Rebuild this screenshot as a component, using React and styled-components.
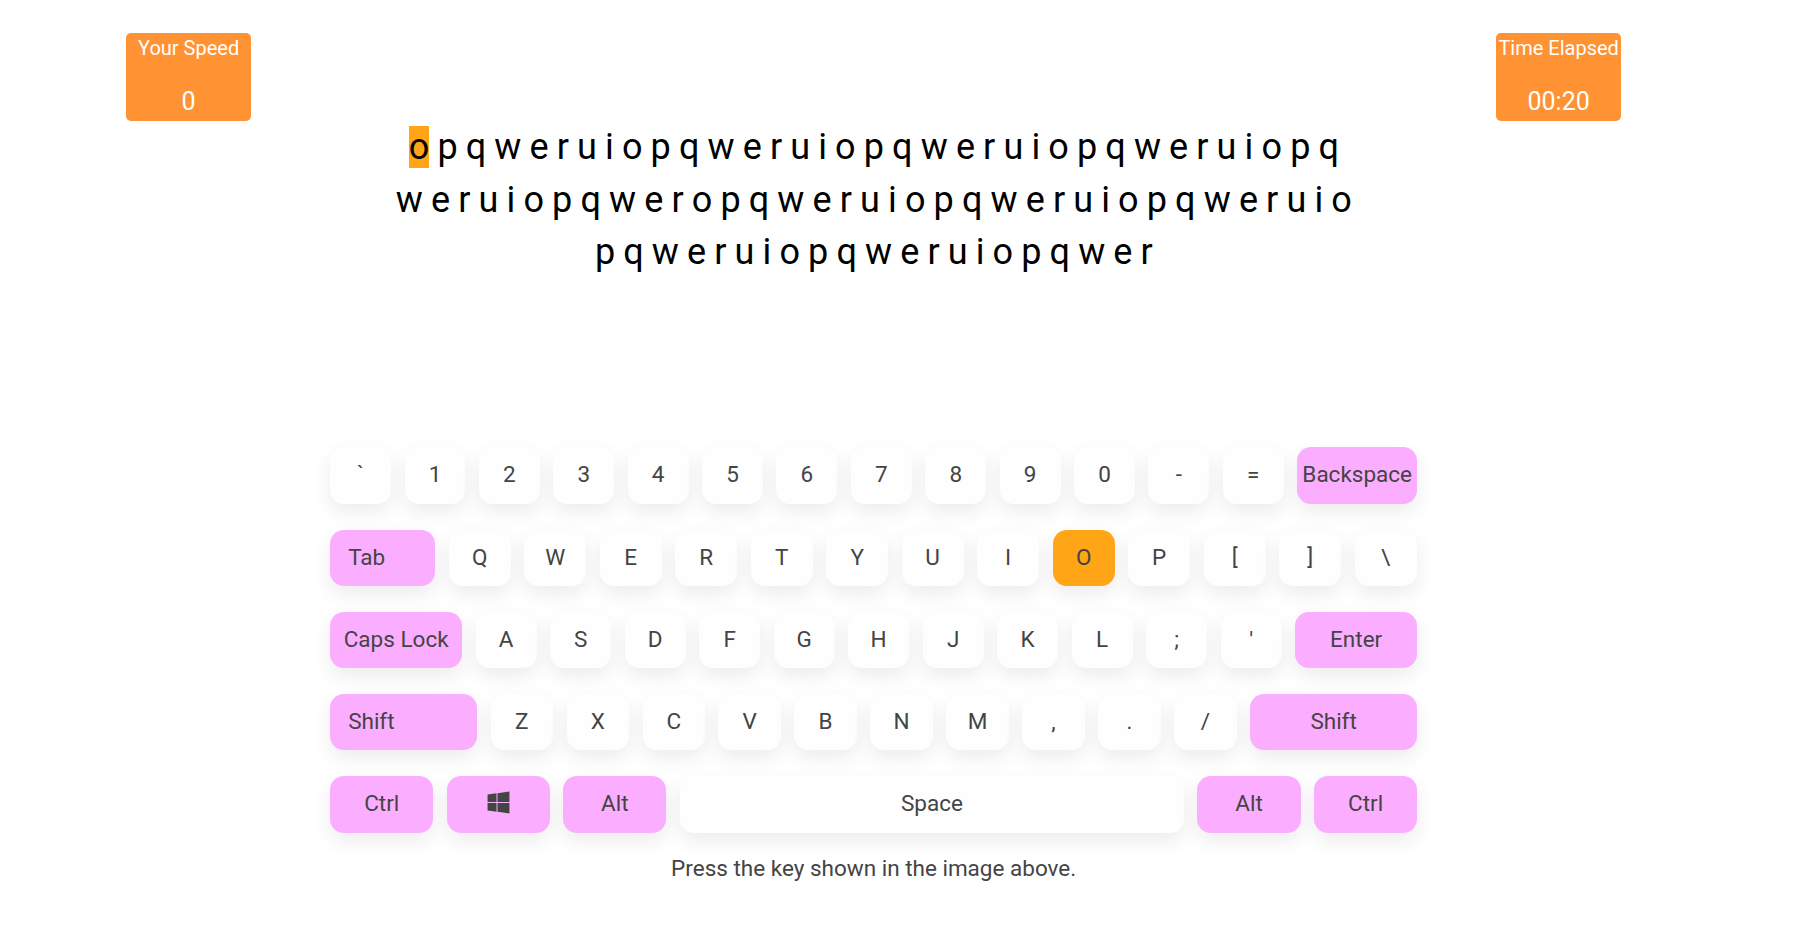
import React from "react";
import styled, { createGlobalStyle } from "styled-components";
import { FaWindows } from "react-icons/fa";

const Global = createGlobalStyle`
  html, body { margin: 0; padding: 0; background: #fff; }
  body { font-family: Roboto, "Liberation Sans", sans-serif; }
`;

const Page = styled.div`
  width: 1495px;
  height: 945px;
  margin-left: 126.15px;
  padding-top: 33px;
  box-sizing: border-box;
  overflow: hidden;
`;

const Stats = styled.div`
  display: flex;
  justify-content: space-between;
`;

const StatBox = styled.div`
  width: 125px;
  height: 88px;
  box-sizing: border-box;
  padding-top: 3px;
  background: #ff9233;
  border-radius: 5px;
  color: #fff;
  text-align: center;
  display: flex;
  flex-direction: column;
  justify-content: space-between;
`;

const StatTitle = styled.div`
  font-size: 20px;
  line-height: 24px;
  white-space: nowrap;
`;

const StatValue = styled.div`
  font-size: 25px;
  line-height: 38px;
`;

const Prompt = styled.div`
  font-size: 36px;
  line-height: 52.6px;
  color: #000;
  text-align: center;
  height: 158px;
`;

const PromptLine = styled.div`
  white-space: pre;
  letter-spacing: -0.4px;
`;

const Cursor = styled.span`
  background: #ffa516;
`;

const Keyboard = styled.div`
  width: 1087px;
  margin: 168px auto 0;
  display: flex;
  flex-direction: column;
  gap: 26px;
`;

const Row = styled.div`
  --key-lift: ${(p) => (p.$tall ? 4 : 2)}px;
  display: flex;
  gap: 13.5px;
  height: ${(p) => (p.$tall ? 57 : 56)}px;
`;

const Key = styled.div`
  flex: ${(p) => (p.$w ? `0 0 ${p.$w}px` : "1 1 0")};
  min-width: 0;
  box-sizing: border-box;
  display: flex;
  align-items: center;
  justify-content: ${(p) => (p.$left ? "flex-start" : "center")};
  padding-left: ${(p) => (p.$left ? "18px" : "0")};
  padding-bottom: var(--key-lift);
  border-radius: 14px;
  font-size: 22.5px;
  color: #444;
  white-space: nowrap;
  background: ${(p) => (p.$kind === "mod" ? "#fbaeff" : p.$kind === "active" ? "#ffa516" : "#fefefe")};
  box-shadow: 0 8px 20px rgba(0, 0, 0, 0.08);
`;

const Hint = styled.div`
  margin-top: 21px;
  text-align: center;
  font-size: 22.5px;
  line-height: 28px;
  color: #444;
`;

const digitRow = ["`", "1", "2", "3", "4", "5", "6", "7", "8", "9", "0", "-", "="];
const qRow = ["Q", "W", "E", "R", "T", "Y", "U", "I", "O", "P", "[", "]", "\\"];
const aRow = ["A", "S", "D", "F", "G", "H", "J", "K", "L", ";", "'"];
const zRow = ["Z", "X", "C", "V", "B", "N", "M", ",", ".", "/"];

const lines = [
  "p q w e r u i o p q w e r u i o p q w e r u i o p q w e r u i o p q",
  "w e r u i o p q w e r o p q w e r u i o p q w e r u i o p q w e r u i o",
  "p q w e r u i o p q w e r u i o p q w e r",
];

export default function App() {
  return (
    <Page>
      <Global />
      <Stats>
        <StatBox>
          <StatTitle>Your Speed</StatTitle>
          <StatValue>0</StatValue>
        </StatBox>
        <StatBox>
          <StatTitle>Time Elapsed</StatTitle>
          <StatValue>00:20</StatValue>
        </StatBox>
      </Stats>
      <Prompt>
        <PromptLine>
          <Cursor>o</Cursor> {lines[0]}
        </PromptLine>
        <PromptLine>{lines[1]}</PromptLine>
        <PromptLine>{lines[2]}</PromptLine>
      </Prompt>
      <Keyboard>
        <Row $tall>
          {digitRow.map((k) => (
            <Key key={k} $w={60.9}>{k}</Key>
          ))}
          <Key $kind="mod">Backspace</Key>
        </Row>
        <Row>
          <Key $kind="mod" $left $w={105}>Tab</Key>
          {qRow.map((k) => (
            <Key key={k} $w={62} $kind={k === "O" ? "active" : undefined}>{k}</Key>
          ))}
        </Row>
        <Row>
          <Key $kind="mod" $w={132}>Caps Lock</Key>
          {aRow.map((k) => (
            <Key key={k} $w={61}>{k}</Key>
          ))}
          <Key $kind="mod">Enter</Key>
        </Row>
        <Row>
          <Key $kind="mod" $left $w={147}>Shift</Key>
          {zRow.map((k) => (
            <Key key={k} $w={62.45}>{k}</Key>
          ))}
          <Key $kind="mod">Shift</Key>
        </Row>
        <Row $tall>
          <Key $kind="mod" $w={103.1}>Ctrl</Key>
          <Key $kind="mod" $w={103.1}><FaWindows size={25} /></Key>
          <Key $kind="mod" $w={103.1}>Alt</Key>
          <Key>Space</Key>
          <Key $kind="mod" $w={103.1}>Alt</Key>
          <Key $kind="mod" $w={103.1}>Ctrl</Key>
        </Row>
      </Keyboard>
      <Hint>Press the key shown in the image above.</Hint>
    </Page>
  );
}
